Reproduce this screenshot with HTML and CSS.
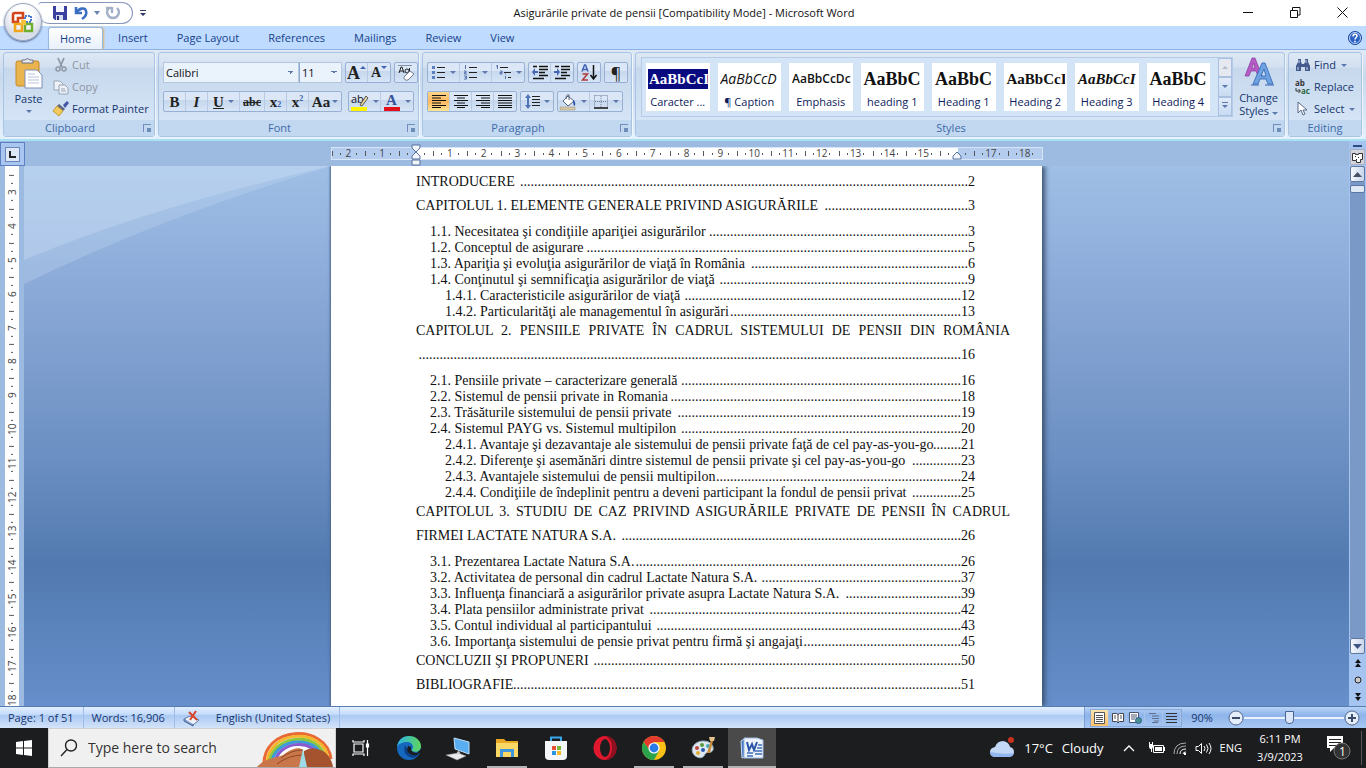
FILE: index.html
```html
<!DOCTYPE html>
<html lang="ro">
<head>
<meta charset="utf-8">
<title>Asigurările private de pensii [Compatibility Mode] - Microsoft Word</title>
<link rel="stylesheet" href="styles.css">
</head>
<body>
<header class="titlebar">
  <div class="quick">
    <button class="ib" aria-label="Save"><svg width="16" height="16" viewBox="0 0 16 16"><path d="M1 1h14v14H3l-2-2z" fill="#3a3fa0"/><path d="M4 1h8v6H4z" fill="#f4f6ff"/><path d="M4 10h7v5H4z" fill="#d5dcf0"/><path d="M5 11h2v4H5z" fill="#25296e"/></svg></button>
    <button class="ib" aria-label="Undo"><svg width="16" height="16" viewBox="0 0 16 16"><path d="M3 2v6h6M3 8c3-5 9-6 10-2 1 3-1 6-4 8" fill="none" stroke="#3b6fc4" stroke-width="2.6"/></svg></button>
    <button class="ib narrow" aria-label="Undo list"><svg width="6" height="4"><path d="M0 0h6L3 4z" fill="#6b83b0"/></svg></button>
    <button class="ib" aria-label="Repeat"><svg width="16" height="16" viewBox="0 0 16 16"><path d="M4 3C0 7 3 13 8 13s8-6 4-10M7 2v6M1 3h6" fill="none" stroke="#a3b0c6" stroke-width="2.4"/></svg></button>
  </div>
  <button class="ib more" aria-label="Customize Quick Access Toolbar"><svg width="6" height="7"><path d="M0 0h6v1H0zM0 3h6L3 6z" fill="#333c66"/></svg></button>
  <h1>Asigurările private de pensii [Compatibility Mode] - Microsoft Word</h1>
  <div class="winbtns">
    <button aria-label="Minimize"><svg width="11" height="11"><path d="M0 5.5h10" stroke="#111"/></svg></button>
    <button aria-label="Restore"><svg width="11" height="11"><path d="M.5 3.500h7v7h-7zM2.500 3V.5h7.500v7.500H8" fill="none" stroke="#111"/></svg></button>
    <button aria-label="Close"><svg width="11" height="11"><path d="M.5.5l10 10M10.500.5l-10 10" stroke="#111"/></svg></button>
  </div>
</header>
<button class="office" aria-label="Office Button"><svg width="24" height="24" viewBox="0 0 24 24" fill="none"><path d="M12 3H4q-2 0-2 2v7h5V8h5z" stroke="#d2441a" stroke-width="2.600" fill="#fff"/><path d="M14 6h6v6h-6z" stroke="#4a7fd0" stroke-width="2" stroke-dasharray="2 1"/><path d="M4 14h7v7H4z" stroke="#f0a51c" stroke-width="2.600"/><path d="M14 14h7v7h-7z" stroke="#6fae2d" stroke-width="2.400"/><path d="M10 10h5v5h-5z" fill="#f7c33c"/></svg></button>

<nav class="tabs">
  <button class="tab active">Home</button><button class="tab">Insert</button><button class="tab">Page Layout</button><button class="tab">References</button><button class="tab">Mailings</button><button class="tab">Review</button><button class="tab">View</button>
  <button class="ib help" aria-label="Help"><svg width="14" height="14" viewBox="0 0 14 14"><circle cx="7" cy="7" r="6.500" fill="#2a62c4" stroke="#1a449a"/><circle cx="7" cy="7" r="5.500" fill="none" stroke="#b9d3f7"/><path d="M5 5.500c0-3 4-3 4-.5C9 6.500 7 6.500 7 8.500" fill="none" stroke="#fff" stroke-width="1.500"/><path d="M6.200 9.700h1.600v1.600H6.200z" fill="#fff"/></svg></button>
</nav>

<div class="ribbon">
  <section class="group clip">
    <div class="body">
      <button class="big"><svg width="28" height="32" viewBox="0 0 28 32"><rect x="1" y="4" width="23" height="25" rx="2" fill="#e9b44e" stroke="#c48a2a"/><path d="M7 6V3h3q2-3 5 0h3v3z" fill="#e8eaf0" stroke="#6a7080"/><path d="M10 13h12l5 5v13H10z" fill="#fff" stroke="#7c8fb8"/><path d="M13 17h7M13 20h11M13 23h11M13 26h11" stroke="#b7c3de"/></svg><span>Paste</span><i class="dn"></i></button>
      <div class="stack">
        <button class="row off"><svg width="16" height="16" viewBox="0 0 16 16"><path d="M5 1l4 9M11 1L7 10" stroke="#8e98a6" stroke-width="1.800"/><circle cx="5" cy="12" r="2" fill="none" stroke="#8e98a6" stroke-width="1.500"/><circle cx="11" cy="12" r="2" fill="none" stroke="#8e98a6" stroke-width="1.500"/></svg>Cut</button>
        <button class="row off"><svg width="16" height="16" viewBox="0 0 16 16" fill="#eef2f8" stroke="#98a4b6"><path d="M1 2h6l3 3v6H1z"/><path d="M6 6h6l3 3v6H6z"/><path d="M8 10h4M8 12h5"/></svg>Copy</button>
        <button class="row"><svg width="16" height="16" viewBox="0 0 16 16"><path d="M10 4l4-4 2 2-4 5z" fill="#4356a8"/><path d="M6 3l6 5-2 2-6-5z" fill="#5b6680"/><path d="M4 5l6 5-4 5-6-5z" fill="#f2c95d" stroke="#c59a36"/></svg>Format Painter</button>
      </div>
    </div>
    <h2>Clipboard<button class="launch" aria-label="Clipboard options"></button></h2>
  </section>

  <section class="group font">
    <div class="body col">
      <div class="line">
        <div class="fields">
          <select class="fam" aria-label="Font"><option>Calibri</option></select><select class="size" aria-label="Font Size"><option>11</option></select>
        </div>
        <div class="set"><button class="g serif big-a" aria-label="Grow Font">A<i class="up ink"></i></button><button class="g serif small-a" aria-label="Shrink Font">A<i class="dn ink"></i></button></div>
        <div class="set end"><button class="g" aria-label="Clear Formatting"><svg width="18" height="18" viewBox="0 0 18 18"><path d="M2 9l2-6h1l2 6M3 7h3" fill="none" stroke="#222"/><circle cx="10" cy="7" r="2" fill="none" stroke="#222"/><path d="M12.500 4v5" stroke="#222"/><path d="M1 1.500h14" stroke="#8492ad"/><path d="M7 13l6-6 4 3-6 6q-4 1-4-3z" fill="#fff" stroke="#6d7892"/></svg></button></div>
      </div>
      <div class="line">
        <div class="set"><button class="g serif"><b>B</b></button><button class="g serif"><i>I</i></button><button class="g serif wide"><u>U</u><i class="dn"></i></button><button class="g serif sm"><s>abc</s></button><button class="g serif">x<sub>2</sub></button><button class="g serif">x<sup>2</sup></button><button class="g serif wide aa">Aa<i class="dn"></i></button></div>
        <div class="set end"><button class="g wide" aria-label="Text Highlight Color"><svg width="18" height="18" viewBox="0 0 18 18"><text x="0" y="10" font-family="Open Sans" font-size="11" fill="#111">ab</text><path d="M9 12l6-9 2 2-6 8z" fill="#e9d9a0" stroke="#555"/><path d="M0 14h16v4H0z" fill="#fff500"/></svg><i class="dn"></i></button><button class="g wide" aria-label="Font Color"><svg width="18" height="18" viewBox="0 0 18 18"><text x="3" y="12" font-family="Liberation Serif" font-weight="bold" font-size="15" fill="#34529a">A</text><path d="M1 14h16v4H1z" fill="#e3101c"/></svg><i class="dn"></i></button></div>
      </div>
    </div>
    <h2>Font<button class="launch" aria-label="Font options"></button></h2>
  </section>

  <section class="group para">
    <div class="body col">
      <div class="line">
        <div class="set"><button class="g wide" aria-label="Bullets"><svg width="15" height="15"><path d="M6 2.500h8M6 7.500h8M6 12.500h8" stroke="#222"/><path d="M1 1h3v3H1zM1 6h3v3H1zM1 11h3v3H1z" fill="#5c7fc0"/></svg><i class="dn"></i></button><button class="g wide" aria-label="Numbering"><svg width="15" height="15"><path d="M6 2.500h8M6 7.500h8M6 12.500h8" stroke="#222"/><path d="M2.500 0v4M1 6h2v1.500H1.500V9H4M1 11h2.500v3H1M2 12.500h1" fill="none" stroke="#5470ae"/></svg><i class="dn"></i></button><button class="g wide" aria-label="Multilevel List"><svg width="17" height="15"><path d="M5 2.500h8M9 7.500h7M13 12.500h3" stroke="#222"/><path d="M2.500 0v4M1 1h2M5 6h2v3H5V7.500h2M10.500 11v3M10 9h1" fill="none" stroke="#5470ae"/></svg><i class="dn"></i></button></div>
        <div class="set"><button class="g" aria-label="Decrease Indent"><svg width="16" height="15"><path d="M1 1.500h4M7 1.500h9M7 4.500h9M7 7.500h6M7 10.500h9M1 13.500h11" stroke="#111" stroke-width="1.500"/><path d="M6 6H3V3L0 7l3 4V8h3z" fill="#4566b8"/></svg></button><button class="g" aria-label="Increase Indent"><svg width="16" height="15"><path d="M1 1.500h4M7 1.500h9M7 4.500h9M7 7.500h6M7 10.500h9M1 13.500h11" stroke="#111" stroke-width="1.500"/><path d="M0 6h3V3l3 4-3 4V8H0z" fill="#4566b8"/></svg></button></div>
        <div class="set"><button class="g" aria-label="Sort"><svg width="16" height="17" fill="none" stroke-width="1.500"><path d="M1 7.500L3.500 1h1L7 7.500M2 5.500h4" stroke="#3f62b4"/><path d="M1.500 10h5l-5 6h5.500" stroke="#b23a3a"/><path d="M12.500 1v13M9.500 11l3 4 3-4" stroke="#111"/></svg></button></div>
        <div class="set"><button class="g pil">¶</button></div>
      </div>
      <div class="line">
        <div class="set"><button class="g on" aria-label="Align Left"><svg width="14" height="13"><path d="M0 .5h14M0 3h9M0 5.500h14M0 8h9M0 10.500h14M0 12.500h9" stroke="#111"/></svg></button><button class="g" aria-label="Center"><svg width="14" height="13"><path d="M0 .5h14M3 3h8M0 5.500h14M3 8h8M0 10.500h14M3 12.500h8" stroke="#111"/></svg></button><button class="g" aria-label="Align Right"><svg width="14" height="13"><path d="M0 .5h14M5 3h9M0 5.500h14M5 8h9M0 10.500h14M5 12.500h9" stroke="#111"/></svg></button><button class="g" aria-label="Justify"><svg width="14" height="13"><path d="M0 .5h14M0 3h14M0 5.500h14M0 8h14M0 10.500h14M0 12.500h14" stroke="#111"/></svg></button></div>
        <div class="set"><button class="g wide" aria-label="Line spacing"><svg width="15" height="15"><path d="M7 2.500h8M7 5.500h8M7 8.500h8M7 11.500h8" stroke="#222"/><path d="M3 0l3 4H4v7h2l-3 4-3-4h2V4H0z" fill="#4f74b8"/></svg><i class="dn"></i></button></div>
        <div class="set"><button class="g wide" aria-label="Shading"><svg width="17" height="16"><path d="M3 7l5-5 6 5-6 5z" fill="#fff" stroke="#56617c"/><path d="M6 5q0-5 3-4v5" fill="none" stroke="#56617c"/><path d="M13 6q3 1 2 6-2-1-2-4z" fill="#2f53a8"/><path d="M0 13h15v3H0z" fill="#d8c9a4" stroke="#8f8a7a" stroke-width=".5"/></svg><i class="dn"></i></button><button class="g wide" aria-label="Borders"><svg width="15" height="14"><path d="M.5.5h13v12M.5.5v12M7 1v12M1 6.500h12" fill="none" stroke="#6f7f9d" stroke-dasharray="1 1"/><path d="M0 13h14" stroke="#111" stroke-width="1.500"/></svg><i class="dn"></i></button></div>
      </div>
    </div>
    <h2>Paragraph<button class="launch" aria-label="Paragraph options"></button></h2>
  </section>

  <section class="group styles">
    <div class="body">
      <div class="gallery">
        <button class="st"><span class="pv h14 sel">AaBbCcI</span><span>Caracter ...</span></button>
        <button class="st"><span class="pv cap">AaBbCcD</span><span>¶ Caption</span></button>
        <button class="st"><span class="pv emp">AaBbCcDc</span><span>Emphasis</span></button>
        <button class="st"><span class="pv h18">AaBbC</span><span>heading 1</span></button>
        <button class="st"><span class="pv h18">AaBbC</span><span>Heading 1</span></button>
        <button class="st"><span class="pv h14">AaBbCcI</span><span>Heading 2</span></button>
        <button class="st"><span class="pv h14 it">AaBbCcI</span><span>Heading 3</span></button>
        <button class="st"><span class="pv h18">AaBbC</span><span>Heading 4</span></button>
        <div class="gs"><button aria-label="Row up" class="dim"><i class="up"></i></button><button aria-label="Row down"><i class="dn"></i></button><button aria-label="More styles"><i class="dn bar"></i></button></div>
      </div>
      <button class="big change"><svg width="32" height="30" viewBox="0 0 32 30"><path d="M2 19L9 1h3l7 18h-4l-2-5H8l-2 5zM9 11h3l-1.500-5z" fill="#b45cc4" stroke="#8a3a9c" stroke-width=".7"/><path d="M10 27L19 6h3l8 21h-5l-2-5h-6l-2 5zM18 19h5l-2-7z" fill="#6ea2e2" stroke="#2f62b0" stroke-width=".8"/><path d="M8 28h8M22 28h9" stroke="#2f62b0"/></svg><span>Change</span><span>Styles <i class="dn"></i></span></button>
    </div>
    <h2>Styles<button class="launch" aria-label="Styles window"></button></h2>
  </section>

  <section class="group edit">
    <div class="body">
      <div class="stack">
        <button class="row"><svg width="16" height="16" viewBox="0 0 16 16"><path d="M3 2h3v3l1 2h2l1-2V2h3v3l2 4v5h-5v-4H6v4H1V9l2-4z" fill="#44598c"/><path d="M3 10v3M12 10v3M4 3v3M11 3v3" stroke="#c9d7f0"/></svg>Find <i class="dn"></i></button>
        <button class="row"><svg width="16" height="16" viewBox="0 0 16 16"><text x="0" y="7" font-family="Open Sans" font-size="8" font-weight="bold" fill="#333">ab</text><text x="6" y="15" font-family="Open Sans" font-size="8" font-weight="bold" fill="#2d6a45">ac</text><path d="M1 9v3h4M3.500 10l2 2-2 2" fill="none" stroke="#333"/></svg>Replace</button>
        <button class="row"><svg width="16" height="16" viewBox="0 0 16 16"><path d="M3 1v11l3-3 2 5 2-1-2-4h4z" fill="#fff" stroke="#5a688a"/></svg>Select <i class="dn"></i></button>
      </div>
    </div>
    <h2>Editing</h2>
  </section>
</div>

<main class="work">
  <div class="vcol">
    <button class="tabstop" aria-label="Tab stop"><span><svg width="7" height="7"><path d="M1 0v6h6" fill="none" stroke="#222" stroke-width="2"/></svg></span></button>
    <div class="vruler"><div class="vscale" id="vscale"></div></div>
  </div>
  <div class="canvas">
    <div class="hrow"><div class="hruler"><div class="hscale" id="hscale"></div>
      <svg class="mk first" width="10" height="22" viewBox="0 0 10 22"><path d="M1 1h8v3L5 8l4 4v3H1v-3l4-4-4-4z" fill="#f2f6fc" stroke="#56719f"/><path d="M1 16h8v5H1z" fill="#f2f6fc" stroke="#56719f"/></svg>
      <svg class="mk last" width="10" height="9" viewBox="0 0 10 9"><path d="M5 1l4 4v3H1V5z" fill="#f2f6fc" stroke="#56719f"/></svg>
    </div></div>
    <div class="desk">
      <svg class="swoosh" width="307" height="118" viewBox="0 0 307 118"><path d="M0 0H307Q140 50 0 118z" fill="#c3d9f2" opacity=".3"/><path d="M0 0H307Q130 40 0 94z" fill="#c8dcf4" opacity=".4"/></svg>
      <article class="page">
        <ol class="toc">
          <li class="ch"><a href="#p2"><span>INTRODUCERE</span><span class="lead sp"></span><span>2</span></a></li>
          <li class="ch"><a href="#p3"><span>CAPITOLUL 1. ELEMENTE GENERALE PRIVIND ASIGURĂRILE</span><span class="lead sp"></span><span>3</span></a>
            <ol class="sub">
              <li><a href="#p3"><span>1.1. Necesitatea şi condiţiile apariţiei asigurărilor</span><span class="lead"></span><span>3</span></a></li>
              <li><a href="#p5"><span>1.2. Conceptul de asigurare</span><span class="lead"></span><span>5</span></a></li>
              <li><a href="#p6"><span>1.3. Apariţia şi evoluţia asigurărilor de viaţă în România</span><span class="lead sp"></span><span>6</span></a></li>
              <li><a href="#p9"><span>1.4. Conţinutul şi semnificaţia asigurărilor de viaţă</span><span class="lead sp"></span><span>9</span></a></li>
              <li class="l3"><a href="#p12"><span>1.4.1. Caracteristicile asigurărilor de viaţă</span><span class="lead sp"></span><span>12</span></a></li>
              <li class="l3"><a href="#p13"><span>1.4.2. Particularităţi ale managementul în asigurări</span><span class="lead"></span><span>13</span></a></li>
            </ol></li>
          <li class="ch"><span class="full">CAPITOLUL 2. PENSIILE PRIVATE ÎN CADRUL SISTEMULUI DE PENSII DIN ROMÂNIA</span><a href="#p16"><span class="lead"></span><span>16</span></a>
            <ol class="sub">
              <li><a href="#p16"><span>2.1. Pensiile private – caracterizare generală</span><span class="lead"></span><span>16</span></a></li>
              <li><a href="#p18"><span>2.2. Sistemul de pensii private in Romania</span><span class="lead"></span><span>18</span></a></li>
              <li><a href="#p19"><span>2.3. Trăsăturile sistemului de pensii private</span><span class="lead sp"></span><span>19</span></a></li>
              <li><a href="#p20"><span>2.4. Sistemul PAYG vs. Sistemul multipilon</span><span class="lead sp"></span><span>20</span></a></li>
              <li class="l3"><a href="#p21"><span>2.4.1. Avantaje şi dezavantaje ale sistemului de pensii private faţă de cel pay-as-you-go</span><span class="lead"></span><span>21</span></a></li>
              <li class="l3"><a href="#p23"><span>2.4.2. Diferenţe şi asemănări dintre sistemul de pensii private şi cel pay-as-you-go</span><span class="lead sp"></span><span>23</span></a></li>
              <li class="l3"><a href="#p24"><span>2.4.3. Avantajele sistemului de pensii multipilon</span><span class="lead"></span><span>24</span></a></li>
              <li class="l3"><a href="#p25"><span>2.4.4. Condiţiile de îndeplinit pentru a deveni participant la fondul de pensii privat</span><span class="lead sp"></span><span>25</span></a></li>
            </ol></li>
          <li class="ch"><span class="full">CAPITOLUL 3. STUDIU DE CAZ PRIVIND ASIGURĂRILE PRIVATE DE PENSII ÎN CADRUL</span><a href="#p26"><span>FIRMEI LACTATE NATURA S.A.</span><span class="lead sp"></span><span>26</span></a>
            <ol class="sub">
              <li><a href="#p26"><span>3.1. Prezentarea Lactate Natura S.A.</span><span class="lead"></span><span>26</span></a></li>
              <li><a href="#p37"><span>3.2. Activitatea de personal din cadrul Lactate Natura S.A.</span><span class="lead sp"></span><span>37</span></a></li>
              <li><a href="#p39"><span>3.3. Influenţa financiară a asigurărilor private asupra Lactate Natura S.A.</span><span class="lead sp"></span><span>39</span></a></li>
              <li><a href="#p42"><span>3.4. Plata pensiilor administrate privat</span><span class="lead sp"></span><span>42</span></a></li>
              <li><a href="#p43"><span>3.5. Contul individual al participantului</span><span class="lead sp"></span><span>43</span></a></li>
              <li><a href="#p45"><span>3.6. Importanţa sistemului de pensie privat pentru firmă şi angajaţi</span><span class="lead"></span><span>45</span></a></li>
            </ol></li>
          <li class="ch"><a href="#p50"><span>CONCLUZII ŞI PROPUNERI</span><span class="lead sp"></span><span>50</span></a></li>
          <li class="ch"><a href="#p51"><span>BIBLIOGRAFIE</span><span class="lead"></span><span>51</span></a></li>
        </ol>
      </article>
    </div>
  </div>
  <div class="scroll">
    <div class="split"></div>
    <button class="rt" aria-label="View Ruler"><svg width="13" height="13"><path d="M1.500 2.500h3v1h3v-1h4v6h-2v3h-4v-2h-4z" fill="#fff" stroke="#333" /><path d="M4 5.500h1M7 6.500h1M5 8.500h1" stroke="#333"/></svg></button>
    <button class="arr" aria-label="Scroll up"><svg width="9" height="5"><path d="M0 5h9L4.500 0z" fill="#454f66"/></svg></button>
    <div class="track"><div class="thumb"></div></div>
    <button class="arr" aria-label="Scroll down"><svg width="9" height="5"><path d="M0 0h9L4.500 5z" fill="#3f5384"/></svg></button>
    <div class="browse">
      <button class="ib" aria-label="Previous Page"><svg width="6" height="8"><path d="M0 4h6L3 0zM0 8h6L3 4z" fill="#111"/></svg></button>
      <button class="ib" aria-label="Select Browse Object"><svg width="8" height="8"><circle cx="4" cy="4" r="3" fill="#ccc" stroke="#222"/></svg></button>
      <button class="ib" aria-label="Next Page"><svg width="6" height="8"><path d="M0 0h6L3 4zM0 4h6L3 8z" fill="#111"/></svg></button>
    </div>
  </div>
</main>

<footer class="status">
  <button>Page: 1 of 51</button><button>Words: 16,906</button>
  <button class="proof" aria-label="Proofing errors"><svg width="17" height="16"><path d="M1 9l6-3 9 4-6 5z" fill="#eef3fb" stroke="#5a76a8"/><path d="M1 9v2l9 5v-2" fill="#8aa3cc" stroke="#44619a"/><path d="M6 2l8 8M13 1L7 10" stroke="#d8452a" stroke-width="2"/></svg></button>
  <button class="lang">English (United States)</button>
  <div class="zoombar">
    <div class="views">
      <button class="on" aria-label="Print Layout"><svg width="11" height="12"><path d="M.5.5h10v11H.5z" fill="#fff" stroke="#555"/><path d="M2 3.500h7M2 5.500h7M2 7.500h7M2 9.500h7" stroke="#555"/></svg></button>
      <button aria-label="Full Screen Reading"><svg width="12" height="12"><path d="M.5 1.500h4l1.500 1 1.500-1h4v8h-4L6 11l-1.500-1.500h-4zM6 2v9" fill="#fff" stroke="#444"/><path d="M2 4h2M2 6h2M8 4h2M8 6h2" stroke="#555"/></svg></button>
      <button aria-label="Web Layout"><svg width="13" height="12"><path d="M.5.5h9v10h-9z" fill="#fff" stroke="#4a5670"/><path d="M2 3h6M2 5h6M2 7h4" stroke="#4a5670"/><circle cx="9.500" cy="8.500" r="3" fill="#4a8f8a" stroke="#2d5f9a"/></svg></button>
      <button aria-label="Outline"><svg width="10" height="10"><path d="M0 .5h7M3 3h7M3 5.500h7M5 8h5M3 9.500h6" stroke="#62718e"/></svg></button>
      <button aria-label="Draft"><svg width="11" height="10"><path d="M0 .5h11M0 3.500h11M0 6.500h11M0 9.500h11" stroke="#333"/></svg></button>
    </div>
    <button class="pct">90%</button>
    <button class="zb" aria-label="Zoom Out"><svg width="16" height="16"><circle cx="8" cy="8" r="7" fill="#e4edfa" stroke="#54698f"/><path d="M4 8h8" stroke="#3c4b68" stroke-width="2"/></svg></button>
    <input type="range" min="0" max="100" value="45" aria-label="Zoom">
    <button class="zb" aria-label="Zoom In"><svg width="16" height="16"><circle cx="8" cy="8" r="7" fill="#e4edfa" stroke="#54698f"/><path d="M4 8h8M8 4v8" stroke="#3c4b68" stroke-width="2"/></svg></button>
  </div>
</footer>

<nav class="taskbar">
  <button class="start" aria-label="Start"><svg width="16" height="16"><path d="M0 2l7-1v6.500H0zM8 1l8-1v7.500H8zM0 8.500h7V15l-7-1zM8 8.500h8V16l-8-1z" fill="#fff"/></svg></button>
  <div class="search">
    <svg width="18" height="18" fill="none" stroke="#222" stroke-width="1.400"><circle cx="11" cy="6.500" r="5.500"/><path d="M7 10.500L1 17"/></svg>
    <input type="text" placeholder="Type here to search" aria-label="Search">
    <svg class="rainbow" width="78" height="36" viewBox="0 0 78 36"><path d="M17 36C19 7 60 8 62 28v8z" fill="#fff"/><g fill="none" stroke-width="3"><path d="M7 36C4 -6 70 -8 74 28" stroke="#e86a32"/><path d="M10 36C8 -3 68 -4 71 28" stroke="#f6b62c"/><path d="M12 36C12 1 65 0 68 28" stroke="#8cc63c"/><path d="M14 36C15 4 63 4 65 28" stroke="#3b9ad8"/><path d="M17 36C19 7 60 8 62 28" stroke="#8a5ad0"/></g><path d="M0 36c8-9 16-8 26-12 8-6 16-9 20-5l1 17z" fill="#c9774a"/><path d="M46 36l1-16q8-5 16-1c6 1 12 9 13 17z" fill="#a5532f"/><path d="M24 27q10-8 22-8M20 33q12-9 26-9" stroke="#8f4726" fill="none"/><path d="M42 36l4-18 4 18z" fill="#9edbe8"/></svg>
  </div>
  <div class="apps">
    <button aria-label="Task View"><svg width="17" height="16" fill="none" stroke="#fff" stroke-width="1.200"><path d="M2 4h9v8H2zM1 0v2h11V0M1 16v-2h11v2M15.500 0v16"/><path d="M14.500 4h2v3h-2z" fill="#fff"/></svg></button>
    <button aria-label="Edge"><svg width="24" height="24" viewBox="0 0 24 24"><defs><linearGradient id="eg" x1="0" y1="0" x2="1" y2="0"><stop offset="0" stop-color="#2ab3e8"/><stop offset="1" stop-color="#5fd45a"/></linearGradient></defs><circle cx="12" cy="12" r="12" fill="#1568bd"/><path d="M0 11C1 3 7 0 12 0c7 0 12 5 12 10 0 5-5 7-9 5-1-1 1-2 1-4 0-3-3-5-6-5-4 0-9 2-10 5z" fill="url(#eg)"/><path d="M9 9c-4 4-1 12 7 13 3-1 5-2 6-4-5 2-11 0-12-5q-1-2-1-4z" fill="#0d3f86"/><path d="M11 10q4 0 3 4 2 3 6 3l4-4v3l-4 3q-8 1-10-5z" fill="#1b1c1e"/></svg></button>
    <button aria-label="Remote Desktop"><svg width="24" height="24"><path d="M8 2l15 4v12L9 13z" fill="#58aef0" stroke="#bfe1fb"/><path d="M11 16l2-1 2 4-3 1z" fill="#ddd"/><path d="M0 19l12-2 8 3-9 4z" fill="#e8eaec" stroke="#999" stroke-width=".5"/></svg></button>
    <button class="run" aria-label="File Explorer"><svg width="22" height="20"><path d="M0 1h8l2 2h12v5H0z" fill="#e9a924"/><path d="M0 5h22v14H0z" fill="#fbd766"/><path d="M4 19v-8h14v8h-3v-5H7v5z" fill="#3f96dc"/></svg></button>
    <button aria-label="Store"><svg width="24" height="24"><path d="M7 5V1.500h10V5" fill="none" stroke="#38a8e8" stroke-width="2"/><path d="M1 5h22v15q0 4-4 4H5q-4 0-4-4z" fill="#f5f6f8"/><path d="M8 10h4v4H8z" fill="#e8503a"/><path d="M13 10h4v4h-4z" fill="#7bb83a"/><path d="M8 15h4v4H8z" fill="#2a96e0"/><path d="M13 15h4v4h-4z" fill="#f5b92c"/></svg></button>
    <button aria-label="Opera"><svg width="24" height="24"><ellipse cx="12" cy="12" rx="11.500" ry="12" fill="#e0182e"/><path d="M12 0q11 1 11.500 12Q23 23 12 24q7-3 7-12T12 0z" fill="#8c1020"/><ellipse cx="12" cy="12" rx="5" ry="9" fill="#1c1d1f"/></svg></button>
    <button class="run" aria-label="Chrome"><svg width="24" height="24" viewBox="0 0 24 24"><circle cx="12" cy="12" r="12" fill="#fbc116"/><path d="M1.600 6A12 12 0 0 1 22.400 6H12L8 14.500z" fill="#e33b2e"/><path d="M1.600 6A12 12 0 0 0 12 24l5-9-9-.5z" fill="#2ba24c"/><circle cx="12" cy="12" r="5.600" fill="#fff"/><circle cx="12" cy="12" r="4.400" fill="#2a7be8"/></svg></button>
    <button class="run" aria-label="Paint"><svg width="25" height="24"><path d="M12 5c8 0 11 5 10 9-2 4-6 1-8 4-1 3-4 5-8 3C-2 17 0 6 12 5z" fill="#dfe8ee" stroke="#93aebf"/><circle cx="6" cy="12" r="2" fill="#b44"/><circle cx="11" cy="9" r="2" fill="#5b9a3e"/><circle cx="17" cy="10" r="2" fill="#4ab"/><circle cx="7" cy="17" r="2" fill="#e0b030"/><circle cx="12" cy="14" r="2" fill="#2a58b0"/><path d="M16 17l4-13 2 1-3 12z" fill="#c98b3c"/><path d="M18 1h6l-1 4h-4z" fill="#e6c28c"/></svg></button>
    <button class="run cur" aria-label="Word"><svg width="24" height="24"><path d="M1 5l5-3v19l-4 1z" fill="#4478c4" stroke="#cfe0f6"/><path d="M4 2h13l6 2v18H4z" fill="#eef4fc" stroke="#9db8e0"/><path d="M7 6l2 8 3-6 2 6 3-8" fill="none" stroke="#2a55a8" stroke-width="2"/><path d="M18 9h4M17 12h5M15 15h7M15 18h7M7 17h6M7 20h6" stroke="#3f6fb8" stroke-width="1.500"/></svg></button>
  </div>
  <div class="tray">
    <button class="wx"><svg width="26" height="22"><path d="M7 20q-6 0-6-5 0-4 5-5 2-6 8-6 6 1 7 6 4 1 4 5t-5 5z" fill="#c3d8f6"/><path d="M1 15q0 5 6 5h13q4 0 5-4-6 2-24-1z" fill="#93b6ee"/><circle cx="22" cy="3" r="3" fill="#c8321e"/></svg><span>17°C</span><span>Cloudy</span></button>
    <button class="chev" aria-label="Hidden icons"><svg width="12" height="8" fill="none" stroke="#fff" stroke-width="1.300"><path d="M1 7l5-5 5 5"/></svg></button>
    <button aria-label="Battery"><svg width="17" height="12"><path d="M5.500 3.500h10v7h-10z" fill="none" stroke="#fff"/><path d="M7 5h7v4H7zM16 5h1v4h-1zM1 2h4v3l-1 2H2L1 5zM1 0h1v2H1zM4 0h1v2H4zM3 7h1v3H3z" fill="#fff"/></svg></button>
    <button aria-label="Wi-Fi"><svg width="14" height="13" fill="none" stroke="#fff"><path d="M1 12Q1 1 13 1M4 12Q4 4 13 4" stroke="#aaa"/><path d="M7 12Q7 7 13 7M10 12q0-2 3-2"/><path d="M11 12h2" stroke-width="2"/></svg></button>
    <button aria-label="Volume"><svg width="17" height="13" fill="none" stroke="#fff"><path d="M1 4.500h2.500l3-3v10l-3-3H1zM9 4q2 2.500 0 5M11.500 2.500q3 4 0 8M14 1q4 5.500 0 11"/></svg></button>
    <button class="eng">ENG</button>
    <button class="clock"><span>6:11 PM</span><span>3/9/2023</span></button>
    <button class="note" aria-label="Notifications"><svg width="26" height="26"><path d="M2 1h16v12H9l-4 4v-4H2z" fill="#fff"/><path d="M4 4.500h12M4 7.500h12M4 10.500h7" stroke="#222"/><circle cx="17" cy="16" r="8" fill="#333" stroke="#777"/><text x="14" y="21" font-family="Open Sans" font-size="12" fill="#fff">1</text></svg></button>
  </div>
</nav>
<script src="script.js"></script>
</body>
</html>
```
FILE: styles.css
```css
* { box-sizing: border-box; }
body { margin: 0; height: 100vh; display: flex; flex-direction: column; overflow: hidden; font: 11px/14px "Open Sans", "Noto Sans", sans-serif; color: #15356f; position: relative; }
button { font: inherit; color: inherit; background: none; border: 0; padding: 0; margin: 0; display: flex; align-items: center; justify-content: center; white-space: nowrap; }
svg { display: block; flex: none; overflow: visible; }
h1, h2 { margin: 0; font: inherit; }
ol { list-style: none; margin: 0; padding: 0; }
a { color: inherit; text-decoration: none; }

.dn, .up { width: 0; height: 0; border: 3px solid transparent; border-top-color: #5c79ad; border-bottom: 0; display: inline-block; flex: none; }
.up { border-top: 0; border-bottom: 3px solid #b3bccb; }
.up.ink, .dn.ink { align-self: flex-start; margin-top: 3px; }
.up.ink { border-bottom-color: #3f62b4; }
.dn.ink { border-top-color: #3f62b4; }
.bar { position: relative; }
.bar::before { content: ""; position: absolute; left: -3px; top: -6px; width: 6px; height: 1px; background: #5c79ad; }

.titlebar { height: 26px; flex: none; display: flex; align-items: center; background: #fff; padding-left: 38px; }
.quick { display: flex; align-items: center; gap: 5px; height: 22px; width: 95px; padding-left: 14px; border: 1px solid #8795bb; border-left: 0; border-radius: 4px 11px 11px 12px; }
.more { width: 20px; }
.titlebar h1 { flex: 1; text-align: center; color: #111; font-size: 11px; padding-right: 10px; }
.winbtns { display: flex; padding-bottom: 1px; }
.winbtns button { width: 47px; height: 25px; }
.office { position: absolute; left: 4px; top: 3px; width: 38px; height: 38px; border-radius: 50%; background: radial-gradient(circle at 50% 30%, #fff 30%, #d5dbe8 70%, #f4f6fa); border: 1px solid #9aa5bd; box-shadow: 0 1px 2px #4d648f; z-index: 2; }

.tabs { height: 24px; flex: none; display: flex; align-items: flex-end; background: #bfdbff; padding: 0 4px 0 48px; border-bottom: 1px solid #8db2e3; }
.tab { height: 22px; padding: 0 15px 0 14px; color: #15428b; }
.tab.active { padding: 0 11px; margin-right: 1px; border: 1px solid #97b8e3; border-bottom: 0; border-radius: 3px 3px 0 0; background: linear-gradient(#fff, #e8f0fa); box-shadow: 1px 0 2px #d9b770; }
.help { margin-left: auto; align-self: center; }

.ribbon { height: 91px; flex: none; display: flex; gap: 3px; padding: 2px 4px 2px 3px; background: linear-gradient(#dfe9f5, #c9d9ed 30%, #e3f1fd); border-bottom: 2px solid #a9e0f3; }
.group { display: flex; flex-direction: column; border: 1px solid #a9c3e2; border-radius: 3px; background: linear-gradient(#dee8f5 0, #d3e0f0 14px, #c7d8ed 15px, #d9e8f8); box-shadow: 1px 1px 0 #eef5fd; }
.group h2 { height: 16px; flex: none; position: relative; text-align: center; color: #3e6aaa; background: #c1d8f0; line-height: 16px; padding-right: 18px; }
.group.edit h2 { padding: 0; }
.launch { position: absolute; right: 3px; top: 4px; width: 8px; height: 8px; border: 1px solid #6f8dbb; border-right: 0; border-bottom: 0; }
.launch::after { content: ""; width: 4px; height: 4px; margin: 2px 0 0 2px; background: #6f8dbb; }
.body { flex: 1; display: flex; min-height: 0; }
.col { flex-direction: column; gap: 8px; padding: 9px 4px 0; }
.clip { width: 152px; }
.font { width: 261px; }
.para { width: 210px; }
.styles { flex: 1; min-width: 0; }
.edit { width: 74px; }
.big { flex-direction: column; justify-content: flex-start; width: 49px; padding-top: 4px; gap: 3px; }
.big .dn { margin-top: 1px; }
.stack { display: flex; flex-direction: column; padding-top: 1px; }
.row { height: 22px; justify-content: flex-start; gap: 3px; }
.off { color: #8d95a3; }
.line { display: flex; gap: 3px; }
.end { margin-left: auto; }
.fields { display: flex; }
select { appearance: none; height: 21px; border: 1px solid #b3c7e1; border-radius: 0; padding: 0 2px; font: inherit; color: #111; background: linear-gradient(45deg, transparent 50%, #5c79ad 50%) no-repeat right 7px center / 3px 3px, linear-gradient(315deg, transparent 50%, #5c79ad 50%) no-repeat right 4px center / 3px 3px, #eaf2fb; }
.fam { width: 136px; }
.size { width: 43px; border-left-color: #8faad0; }
.set { display: flex; height: 21px; border: 1px solid #98b0d4; border-radius: 2px; background: linear-gradient(#dbe7f6 40%, #c6d7ed 41%, #d6e5f6); }
.g { width: 22px; color: #222; border-right: 1px solid #b9cbe4; }
.g:last-child { border-right: 0; }
.wide { width: 32px; gap: 4px; }
.serif { font: bold 15px/18px "Liberation Serif", serif; }
.serif sub, .serif sup { font-size: 8px; line-height: 8px; color: #3f62b4; }
.serif sup { align-self: flex-start; margin-top: 3px; }
.serif sub { align-self: flex-end; margin-bottom: 2px; }
.big-a { font-size: 18px; }
.small-a { font-size: 14px; }
.sm { font-size: 12px; width: 25px; }
.aa { gap: 2px; }
.pil { font: 16px/18px "Open Sans", sans-serif; }
.on { background: linear-gradient(#fcd58a, #fbb75e 50%, #fde594); }

.gallery { flex: 1; min-width: 0; display: flex; gap: 8px; height: 60px; margin: 4px 0 0 5px; padding: 5px 0 5px 4px; background: #d4e4f7; border: 1px solid #b5cbe8; }
.st { flex: 1 1 0; min-width: 0; flex-direction: column; justify-content: space-between; background: #fff; padding: 6px 2px 2px; color: #0c1c5c; overflow: hidden; }
.pv { width: 100%; height: 20px; line-height: 20px; text-align: left; overflow: hidden; color: #111; padding-left: 1px; }
.h14 { font: bold 15px/20px "Liberation Serif", serif; }
.h18 { font: bold 18px/20px "Liberation Serif", serif; }
.sel { background: #0a0a80; color: #fff; }
.it { font-style: italic; }
.cap { font-size: 14px; font-style: italic; }
.emp { font-size: 12px; font-weight: 600; }
.gs { width: 14px; flex: none; display: flex; flex-direction: column; margin: -5px 0 -5px 0; }
.gs button { flex: 1; border: 1px solid #aac0e0; background: linear-gradient(#dfeafa, #c9dbf2); }
.gs .dim { background: #e6eaf0; }
.change { width: 51px; gap: 0; line-height: 13px; }
.change svg { margin-bottom: 4px; }
.edit .stack { padding-left: 6px; }
.edit .row .dn { margin-left: 2px; }

.work { flex: 1; min-height: 0; display: flex; background: #9dbae0; }
.vcol { width: 24px; flex: none; display: flex; flex-direction: column; align-items: flex-start; padding-top: 1px; }
.tabstop { width: 25px; height: 24px; flex: none; border: 1px solid #5b7fc0; background: #a9c6f0; }
.tabstop span { width: 15px; height: 15px; display: flex; align-items: center; justify-content: center; border: 1px solid #6b86bc; background: #dce8f8; }
.vruler { flex: 1; min-height: 0; width: 14px; margin-left: 5px; background: #fff; overflow: hidden; padding-top: 9px; display: flex; }
.vscale { flex: 1; display: flex; flex-direction: column; margin-bottom: -11px; }
.vscale span { flex: 1; writing-mode: vertical-rl; transform: rotate(180deg); display: flex; align-items: center; justify-content: center; background: linear-gradient(#555, #555) center bottom / 5px 1px no-repeat, linear-gradient(#555, #555) center 25% / 2px 1px no-repeat, linear-gradient(#555, #555) center 75% / 2px 1px no-repeat; font-size: 10px; line-height: 14px; color: #444; }
.canvas { flex: 1; min-width: 0; display: flex; flex-direction: column; }
.hrow { height: 25px; flex: none; display: flex; justify-content: center; padding-top: 6px; }
.hruler { width: 712px; height: 13px; position: relative; border: 1px solid #d6e5f8; background: linear-gradient(90deg, #b4cdef 85px, #fff 85px, #fff 626px, #b4cdef 626px); }
.hscale { display: flex; height: 100%; }
.hscale span { flex: 1; text-align: center; font-size: 10px; line-height: 11px; color: #444; background: linear-gradient(#555, #555) left center / 1px 5px no-repeat, linear-gradient(#555, #555) 25% center / 1px 2px no-repeat, linear-gradient(#555, #555) 75% center / 1px 2px no-repeat; }
.mk { position: absolute; }
.first { left: 79px; top: -4px; }
.last { left: 620px; top: 3px; }
.desk { flex: 1; min-height: 0; display: flex; justify-content: center; position: relative; overflow: hidden; background: linear-gradient(#9fbfe6, #8caad8 22%, #6b8fc2 54%, #527ab0 74%, #668fcb); }
.swoosh { position: absolute; left: 0; top: 0; }
.page { position: relative; width: 711px; background: #fff; box-shadow: 3px 0 5px #3b5273, -1px 0 2px #52698f; padding: 8px 32px 0 85px; }
.toc { font: 14px/16px "Liberation Serif", "Times New Roman", serif; color: #111; }
.toc a { display: flex; margin-right: 35px; white-space: nowrap; }
.ch > a, .full { padding-bottom: 8px; }
.full { display: block; text-align-last: justify; white-space: nowrap; }
.sub { padding: 2px 0 3px; }
.sub li { padding-left: 14px; }
.sub .l3 { padding-left: 29px; }
.lead { flex: 1; min-width: 0; display: flex; justify-content: flex-end; }
.sp { margin-left: 4px; }

.scroll { width: 17px; flex: none; display: flex; flex-direction: column; align-items: center; background: #a6c4f0; padding-top: 4px; }
.split { width: 9px; height: 2px; background: #2f4a80; margin-bottom: 2px; }
.rt { width: 15px; height: 16px; background: #d3d3de; border: 1px solid #a9b0c4; margin-bottom: 1px; }
.arr { width: 15px; height: 16px; flex: none; border: 1px solid #60779f; border-radius: 2px; background: linear-gradient(90deg, #f4f8fd, #c9d6ea); }
.track { flex: 1; width: 15px; background: #7a99c6; padding-top: 3px; }
.thumb { height: 8px; border: 1px solid #5c76a4; border-radius: 2px; background: #dfe8f5; }
.browse { height: 52px; flex: none; display: flex; flex-direction: column; justify-content: space-around; }

.status { height: 22px; flex: none; display: flex; align-items: stretch; border-top: 1px solid #567db1; background: linear-gradient(#e3efff, #c4dcfb 35%, #abc9f2 40%, #d3e3f9); color: #15356f; }
.status > button { padding: 0 9px 0 8px; border-right: 1px solid #9dbde8; }
.status > .proof { border: 0; }
.status > .lang { padding-left: 7px; }
.zoombar { margin-left: auto; display: flex; align-items: center; padding-right: 6px; background: linear-gradient(#b8d3f6, #8eb4ea 40%, #a9c8f3); border-left: 1px solid #7d9fd0; }
.views { display: flex; height: 18px; margin-left: 5px; border: 1px solid #88a8d6; }
.views button { width: 18px; border-right: 1px solid #a9c3e8; }
.views .on { background: linear-gradient(#fce3b0, #f9c06a); }
.pct { width: 46px; padding-right: 6px; }
.zoombar input { appearance: none; width: 100px; height: 16px; margin: 0; background: linear-gradient(#e8f1fd, #e8f1fd) center / 100% 2px no-repeat; }
.zoombar input::-webkit-slider-thumb { appearance: none; width: 9px; height: 13px; border: 1px solid #4c6492; border-radius: 1px 1px 5px 5px; background: #dbe7f8; }

.taskbar { height: 40px; flex: none; display: flex; align-items: stretch; background: #1c1d1f; color: #fff; }
.start { width: 48px; }
.search { width: 288px; display: flex; align-items: center; background: #f0f0f0; border: 1px solid #d0d0d0; border-bottom-color: #aaa; padding-left: 11px; }
.search input { flex: 1; min-width: 0; border: 0; background: none; padding: 0 0 0 10px; font: 14px/20px "Open Sans", sans-serif; }
.search input::placeholder { color: #333; }
.rainbow { align-self: flex-end; margin-left: -20px; }
.apps { display: flex; gap: 1px; }
.apps button { width: 48px; }
.run { border-bottom: 2px solid #b3b3b3; border-top: 2px solid transparent; background-clip: padding-box; }
.apps .run:not(.cur) { width: 40px; margin: 0 4px; }
.cur { background: #4a4a4b; }
.tray { margin-left: auto; display: flex; align-items: center; gap: 8px; }
.wx { font-size: 13px; gap: 9px; margin-right: 11px; }
.chev { margin-right: 5px; }
.clock { flex-direction: column; width: 52px; line-height: 18px; margin-left: 4px; }
.note { width: 48px; height: 34px; border-right: 1px solid #555; margin-right: 4px; }
```
FILE: script.js
```javascript
// Dot leaders: as many dots as fit between an entry and its page number
document.querySelectorAll(".lead").forEach(function (el) {
  var space = el.clientWidth;
  var probe = document.createElement("span");
  probe.textContent = ".".repeat(100);
  el.appendChild(probe);
  var dot = probe.getBoundingClientRect().width / 100;
  el.textContent = ".".repeat(Math.max(0, Math.floor(space / dot)));
});

// Ruler cells, one per centimetre
function scale(id, labels) {
  var host = document.getElementById(id);
  labels.forEach(function (n) {
    var cell = document.createElement("span");
    cell.textContent = n;
    host.appendChild(cell);
  });
}
var across = [2, 1, ""];
for (var i = 1; i <= 18; i++) across.push(i === 16 ? "" : i);
scale("hscale", across);
var down = [];
for (var j = 3; j <= 18; j++) down.push(j);
scale("vscale", down);
```
